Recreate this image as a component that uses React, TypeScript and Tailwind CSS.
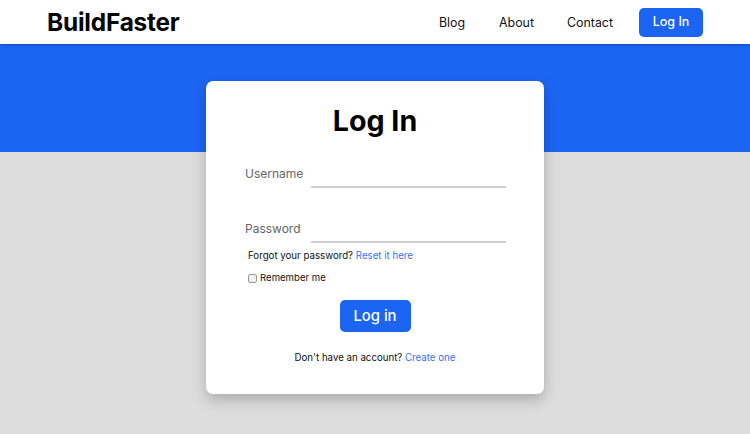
import React from "react";

export default function App() {
  return (
    <div className="w-[750px] h-[434px] flex flex-col overflow-hidden font-['Inter',sans-serif] text-[#111]">
      <header className="relative z-10 h-[44px] bg-white flex items-center justify-between pl-[47px] pr-[47px] shadow-[0_1px_3px_rgba(0,0,0,0.25)]">
        <div className="text-[24.4px] font-bold tracking-[-0.2px] text-black">BuildFaster</div>
        <nav className="flex items-center text-[12.4px] text-[#111]">
          <a className="mr-[34px] ml-[1px] pt-[2px]">Blog</a>
          <a className="mr-[33px] pt-[2px]">About</a>
          <a className="mr-[26px] pt-[2px]">Contact</a>
          <button className="w-[64px] h-[29px] pt-[1px] rounded-[5px] bg-[#1c64f2] text-white text-[12.5px] font-medium">Log In</button>
        </nav>
      </header>
      <main className="flex-1 flex justify-center items-start pt-[37px] bg-[linear-gradient(to_bottom,#1c64f2_108px,#dddddd_108px)]">
        <div className="w-[338px] bg-white rounded-[7px] shadow-[0_6px_14px_rgba(0,0,0,0.22)] flex flex-col pt-[22px] pb-[29px] px-[38px]">
          <h1 className="text-[28.6px] leading-[36px] font-bold text-center text-black">Log In</h1>
          <div className="mt-[19px] flex items-center h-[30px]">
            <label className="w-[67px] pl-[1px] pt-[1px] text-[12px] text-[#666]">Username</label>
            <div className="flex-1 self-stretch border-b-2 border-[#cfcfcf]"></div>
          </div>
          <div className="mt-[25px] flex items-center h-[30px]">
            <label className="w-[67px] pl-[1px] pt-[1px] text-[12px] text-[#666]">Password</label>
            <div className="flex-1 self-stretch border-b-2 border-[#cfcfcf]"></div>
          </div>
          <div className="mt-[6px] ml-[4px] text-[9.7px] leading-[14px] text-[#111]">
            Forgot your password? <a className="text-[#3a72f2]">Reset it here</a>
          </div>
          <div className="mt-[8px] ml-[4px] flex items-center text-[9.6px] leading-[14px] text-[#111]">
            <span className="w-[9px] h-[9px] rounded-[2px] border border-[#9a9a9a] bg-[#f0f0f0] mr-[3px]"></span>
            Remember me
          </div>
          <div className="mt-[15px] flex justify-center">
            <button className="w-[71px] h-[32px] pt-[1px] rounded-[5px] bg-[#1c64f2] text-white text-[14.8px] font-medium">Log in</button>
          </div>
          <div className="mt-[19px] text-center text-[9.7px] leading-[14px] text-[#111]">
            Don't have an account? <a className="text-[#3a72f2]">Create one</a>
          </div>
        </div>
      </main>
    </div>
  );
}
